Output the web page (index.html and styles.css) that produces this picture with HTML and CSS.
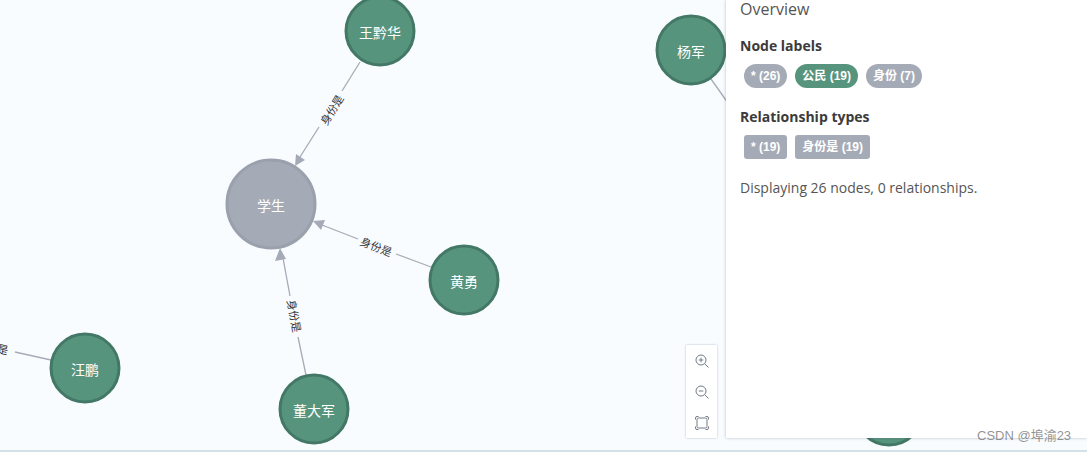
FILE: index.html
```html
<!DOCTYPE html>
<html lang="zh-CN">
<head>
    <meta charset="UTF-8">
    <title>Graph overview</title>
    <link rel="stylesheet" href="styles.css">
</head>
<body>
    <div class="graph-view">
        <svg class="graph" width="1087" height="450" viewBox="0 0 1087 450">
            <g class="edge">
                <line x1="360" y1="62" x2="342" y2="91"></line>
                <line x1="319" y1="127" x2="300" y2="157"></line>
                <polygon points="295,166 296,154 305,160"></polygon>
                <text transform="translate(332,110) rotate(-58)" y="4">身份是</text>
            </g>
            <g class="edge">
                <line x1="431" y1="267" x2="396" y2="254"></line>
                <line x1="358" y1="239" x2="322" y2="225"></line>
                <polygon points="313,221 325,220 321,230"></polygon>
                <text transform="translate(376,247) rotate(21)" y="4">身份是</text>
            </g>
            <g class="edge">
                <line x1="306" y1="375" x2="298" y2="337"></line>
                <line x1="290" y1="296" x2="283" y2="258"></line>
                <polygon points="280,248 286,259 275,261"></polygon>
                <text transform="translate(294,316) rotate(79)" y="4">身份是</text>
            </g>
            <g class="edge">
                <line x1="51" y1="360" x2="15" y2="352"></line>
                <text transform="translate(-8,347) rotate(13)" y="4">身份是</text>
            </g>
            <g class="edge">
                <line x1="711" y1="79" x2="740" y2="120"></line>
            </g>

            <g class="node node-person">
                <circle cx="380" cy="31" r="34"></circle>
                <text x="380" y="31" dy="7">王黔华</text>
            </g>
            <g class="node node-type">
                <circle cx="271" cy="204" r="44"></circle>
                <text x="271" y="204" dy="7">学生</text>
            </g>
            <g class="node node-person">
                <circle cx="464" cy="280" r="34"></circle>
                <text x="464" y="280" dy="7">黄勇</text>
            </g>
            <g class="node node-person">
                <circle cx="314" cy="409" r="34"></circle>
                <text x="314" y="409" dy="7">董大军</text>
            </g>
            <g class="node node-person">
                <circle cx="85" cy="368" r="34"></circle>
                <text x="85" y="368" dy="7">汪鹏</text>
            </g>
            <g class="node node-person">
                <circle cx="691" cy="50" r="34"></circle>
                <text x="691" y="50" dy="7">杨军</text>
            </g>
            <g class="node node-person">
                <circle cx="889" cy="411" r="34"></circle>
            </g>
        </svg>

        <div class="zoom-controls">
            <button class="zoom-btn" aria-label="Zoom in">
                <svg width="14" height="14" viewBox="0 0 14 14">
                    <circle cx="6" cy="6" r="5"></circle>
                    <path d="M9.7 9.7 13.5 13.5M3.7 6h4.6M6 3.7v4.6"></path>
                </svg>
            </button>
            <button class="zoom-btn" aria-label="Zoom out">
                <svg width="14" height="14" viewBox="0 0 14 14">
                    <circle cx="6" cy="6" r="5"></circle>
                    <path d="M9.7 9.7 13.5 13.5M3.7 6h4.6"></path>
                </svg>
            </button>
            <button class="zoom-btn" aria-label="Fit to screen">
                <svg width="14" height="14" viewBox="0 0 14 14">
                    <rect x="2" y="2" width="10" height="10" rx="1.500"></rect>
                    <path d="M.5 3.500V2A1.500 1.500 0 0 1 2 .5h1.500M10.500 .5H12A1.500 1.500 0 0 1 13.500 2v1.500M13.500 10.500V12a1.500 1.500 0 0 1-1.500 1.500h-1.500M3.500 13.500H2A1.500 1.500 0 0 1 .5 12v-1.500"></path>
                </svg>
            </button>
        </div>

        <aside class="overview">
            <h3 class="overview-title">Overview</h3>
            <h4>Node labels</h4>
            <div class="pills">
                <span class="pill pill-grey">* (26)</span>
                <span class="pill pill-green">公民 (19)</span>
                <span class="pill pill-grey">身份 (7)</span>
            </div>
            <h4>Relationship types</h4>
            <div class="pills">
                <span class="pill pill-grey pill-square">* (19)</span>
                <span class="pill pill-grey pill-square">身份是 (19)</span>
            </div>
            <p class="summary">Displaying 26 nodes, 0 relationships.</p>
        </aside>

        <div class="watermark">CSDN @埠渝23</div>
    </div>
</body>
</html>
```

FILE: styles.css
```css
html, body {
    margin: 0;
    height: 452px;
    overflow: hidden;
    background: #f9fcff;
}

.graph-view {
    position: relative;
    display: flex;
    justify-content: flex-end;
    align-items: flex-start;
    height: 450px;
    border-bottom: 2px solid #d5e0e6;
    overflow: hidden;
}

.graph {
    position: absolute;
    top: 0;
    left: 0;
}

.edge line {
    stroke: #a5abb6;
    stroke-width: 1.3;
}

.edge polygon {
    fill: #a5abb6;
}

.edge text {
    font-family: "Noto Sans CJK SC", sans-serif;
    font-size: 11px;
    fill: #333;
    text-anchor: middle;
}

.node circle {
    stroke-width: 3;
}

.node text {
    font-family: "Noto Sans CJK SC", sans-serif;
    font-size: 14px;
    fill: #fff;
    text-anchor: middle;
}

.node-person circle {
    fill: #57947d;
    stroke: #447866;
}

.node-type circle {
    fill: #a5abb6;
    stroke: #9aa1ac;
}

.zoom-controls {
    position: absolute;
    left: 686px;
    top: 345px;
    display: flex;
    flex-direction: column;
    width: 31px;
    height: 93px;
    background: #fff;
    box-shadow: 0 0 2px rgba(82, 100, 120, 0.4);
}

.zoom-btn {
    flex: 1;
    display: flex;
    align-items: center;
    justify-content: center;
    padding: 0;
    border: 0;
    background: none;
}

.zoom-btn svg {
    fill: none;
    stroke: #717b85;
    stroke-width: 1;
}

.overview {
    position: relative;
    box-sizing: border-box;
    width: 361px;
    height: 438px;
    padding: 0 14px;
    background: #fff;
    color: #3b3b3b;
    font-family: "Open Sans", sans-serif;
    box-shadow: 0 0 3px rgba(82, 100, 120, 0.4);
}

.overview-title {
    margin: 0;
    font-size: 16px;
    line-height: 18px;
    font-weight: 400;
    color: #555;
}

.overview h4 {
    margin: 18px 0 9px;
    font-size: 14px;
    line-height: 19px;
    font-weight: 700;
}

.pills {
    display: flex;
    gap: 8px;
    padding-left: 4px;
    margin-bottom: 19px;
}

.pill {
    padding: 0 7px;
    height: 24px;
    line-height: 24px;
    border-radius: 12px;
    color: #fff;
    font-family: "Liberation Sans", "Noto Sans CJK SC", sans-serif;
    font-size: 12px;
    font-weight: 700;
}

.pill-grey {
    background: #a5abb6;
}

.pill-green {
    background: #57947d;
}

.pill-square {
    border-radius: 3px;
}

.summary {
    margin: 0;
    font-size: 14px;
    line-height: 19px;
    color: #555;
}

.watermark {
    position: absolute;
    left: 977px;
    top: 427px;
    font-family: "Liberation Sans", "Noto Sans CJK SC", sans-serif;
    font-size: 13px;
    line-height: 18px;
    color: rgba(110, 110, 110, 0.75);
}
```
